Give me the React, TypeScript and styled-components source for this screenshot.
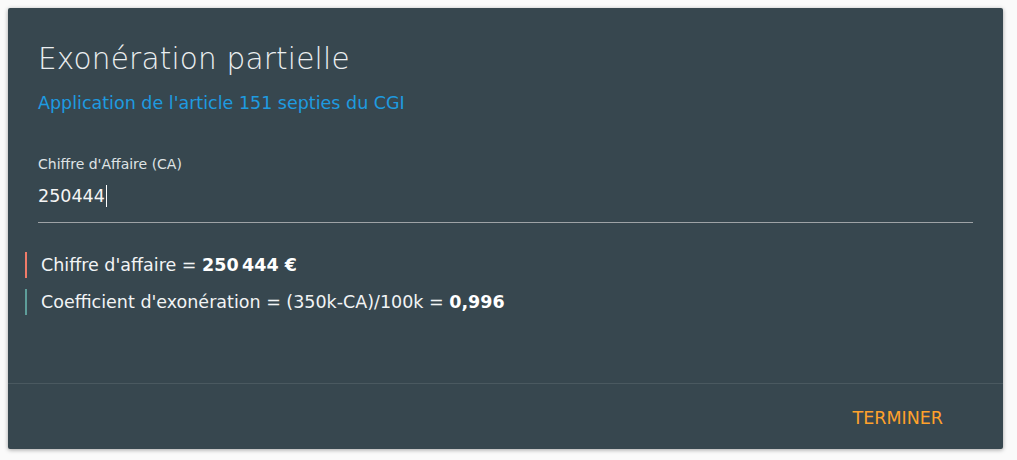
import styled, { createGlobalStyle } from "styled-components";

const GlobalStyle = createGlobalStyle`
  body {
    margin: 0;
    background: #fafafa;
    font-family: "DejaVu Sans", Verdana, sans-serif;
  }
`;

const results = [
  { label: "Chiffre d'affaire = ", value: "250\u202f444 €", accent: "#f07b69" },
  {
    label: "Coefficient d'exonération = (350k-CA)/100k = ",
    value: "0,996",
    accent: "#5e9e9a",
  },
];

const App = () => {
  return (
    <Page>
      <GlobalStyle />
      <Card>
        <Body>
          <Title>Exonération partielle</Title>
          <Subtitle>Application de l'article 151 septies du CGI</Subtitle>
          <Field>
            <Label>Chiffre d'Affaire (CA)</Label>
            <InputRow>
              250444
              <Caret />
            </InputRow>
          </Field>
          <Results>
            {results.map((r) => (
              <ResultLine key={r.label} $accent={r.accent}>
                {r.label}
                <strong>{r.value}</strong>
              </ResultLine>
            ))}
          </Results>
        </Body>
        <Footer>
          <ActionButton>Terminer</ActionButton>
        </Footer>
      </Card>
    </Page>
  );
};

const Page = styled.div`
  padding: 8px 14px 10px 8px;
`;

const Card = styled.div`
  background: #37474f;
  border-radius: 2px;
  box-shadow: 0 1px 4px rgba(0, 0, 0, 0.35);
  color: #ffffff;
  display: flex;
  flex-direction: column;
`;

const Body = styled.div`
  padding: 31px 30px 0 17px;
  height: 376px;
  box-sizing: border-box;
  border-bottom: 1px solid #4a5960;
`;

const Title = styled.h1`
  margin: 0 0 0 13px;
  font-weight: 200;
  font-size: 29.5px;
  line-height: 40px;
  color: #eceff1;
  letter-spacing: 0.2px;
`;

const Subtitle = styled.p`
  margin: 13px 0 0 13px;
  font-size: 17.5px;
  line-height: 22px;
  color: #1e9be0;
`;

const Field = styled.div`
  margin: 42px 0 0 13px;
  border-bottom: 1px solid #9ea3a6;
  padding-bottom: 14px;
`;

const Label = styled.div`
  font-size: 14px;
  line-height: 16px;
  color: #dfe3e5;
`;

const InputRow = styled.div`
  margin-top: 12px;
  font-size: 17.5px;
  line-height: 24px;
  color: #f5f5f5;
  display: flex;
  align-items: center;
`;

const Caret = styled.span`
  display: inline-block;
  width: 1.5px;
  height: 22px;
  background: #ffffff;
  margin-left: 1px;
`;

const Results = styled.div`
  margin-top: 29px;
  display: flex;
  flex-direction: column;
  gap: 11px;
`;

const ResultLine = styled.div<{ $accent: string }>`
  border-left: 2px solid ${(p) => p.$accent};
  padding-left: 14px;
  font-size: 17.5px;
  line-height: 26px;
  color: #f2f4f5;

  strong {
    font-weight: 700;
    color: #ffffff;
  }
`;

const Footer = styled.div`
  height: 65px;
  display: flex;
  align-items: center;
  justify-content: flex-end;
  padding-right: 48px;
`;

const ActionButton = styled.button`
  background: none;
  border: none;
  padding: 6px 12px 4px;
  font-family: "DejaVu Sans", Verdana, sans-serif;
  font-size: 17.5px;
  text-transform: uppercase;
  color: #ffa12b;
  cursor: pointer;
`;

export default App;
